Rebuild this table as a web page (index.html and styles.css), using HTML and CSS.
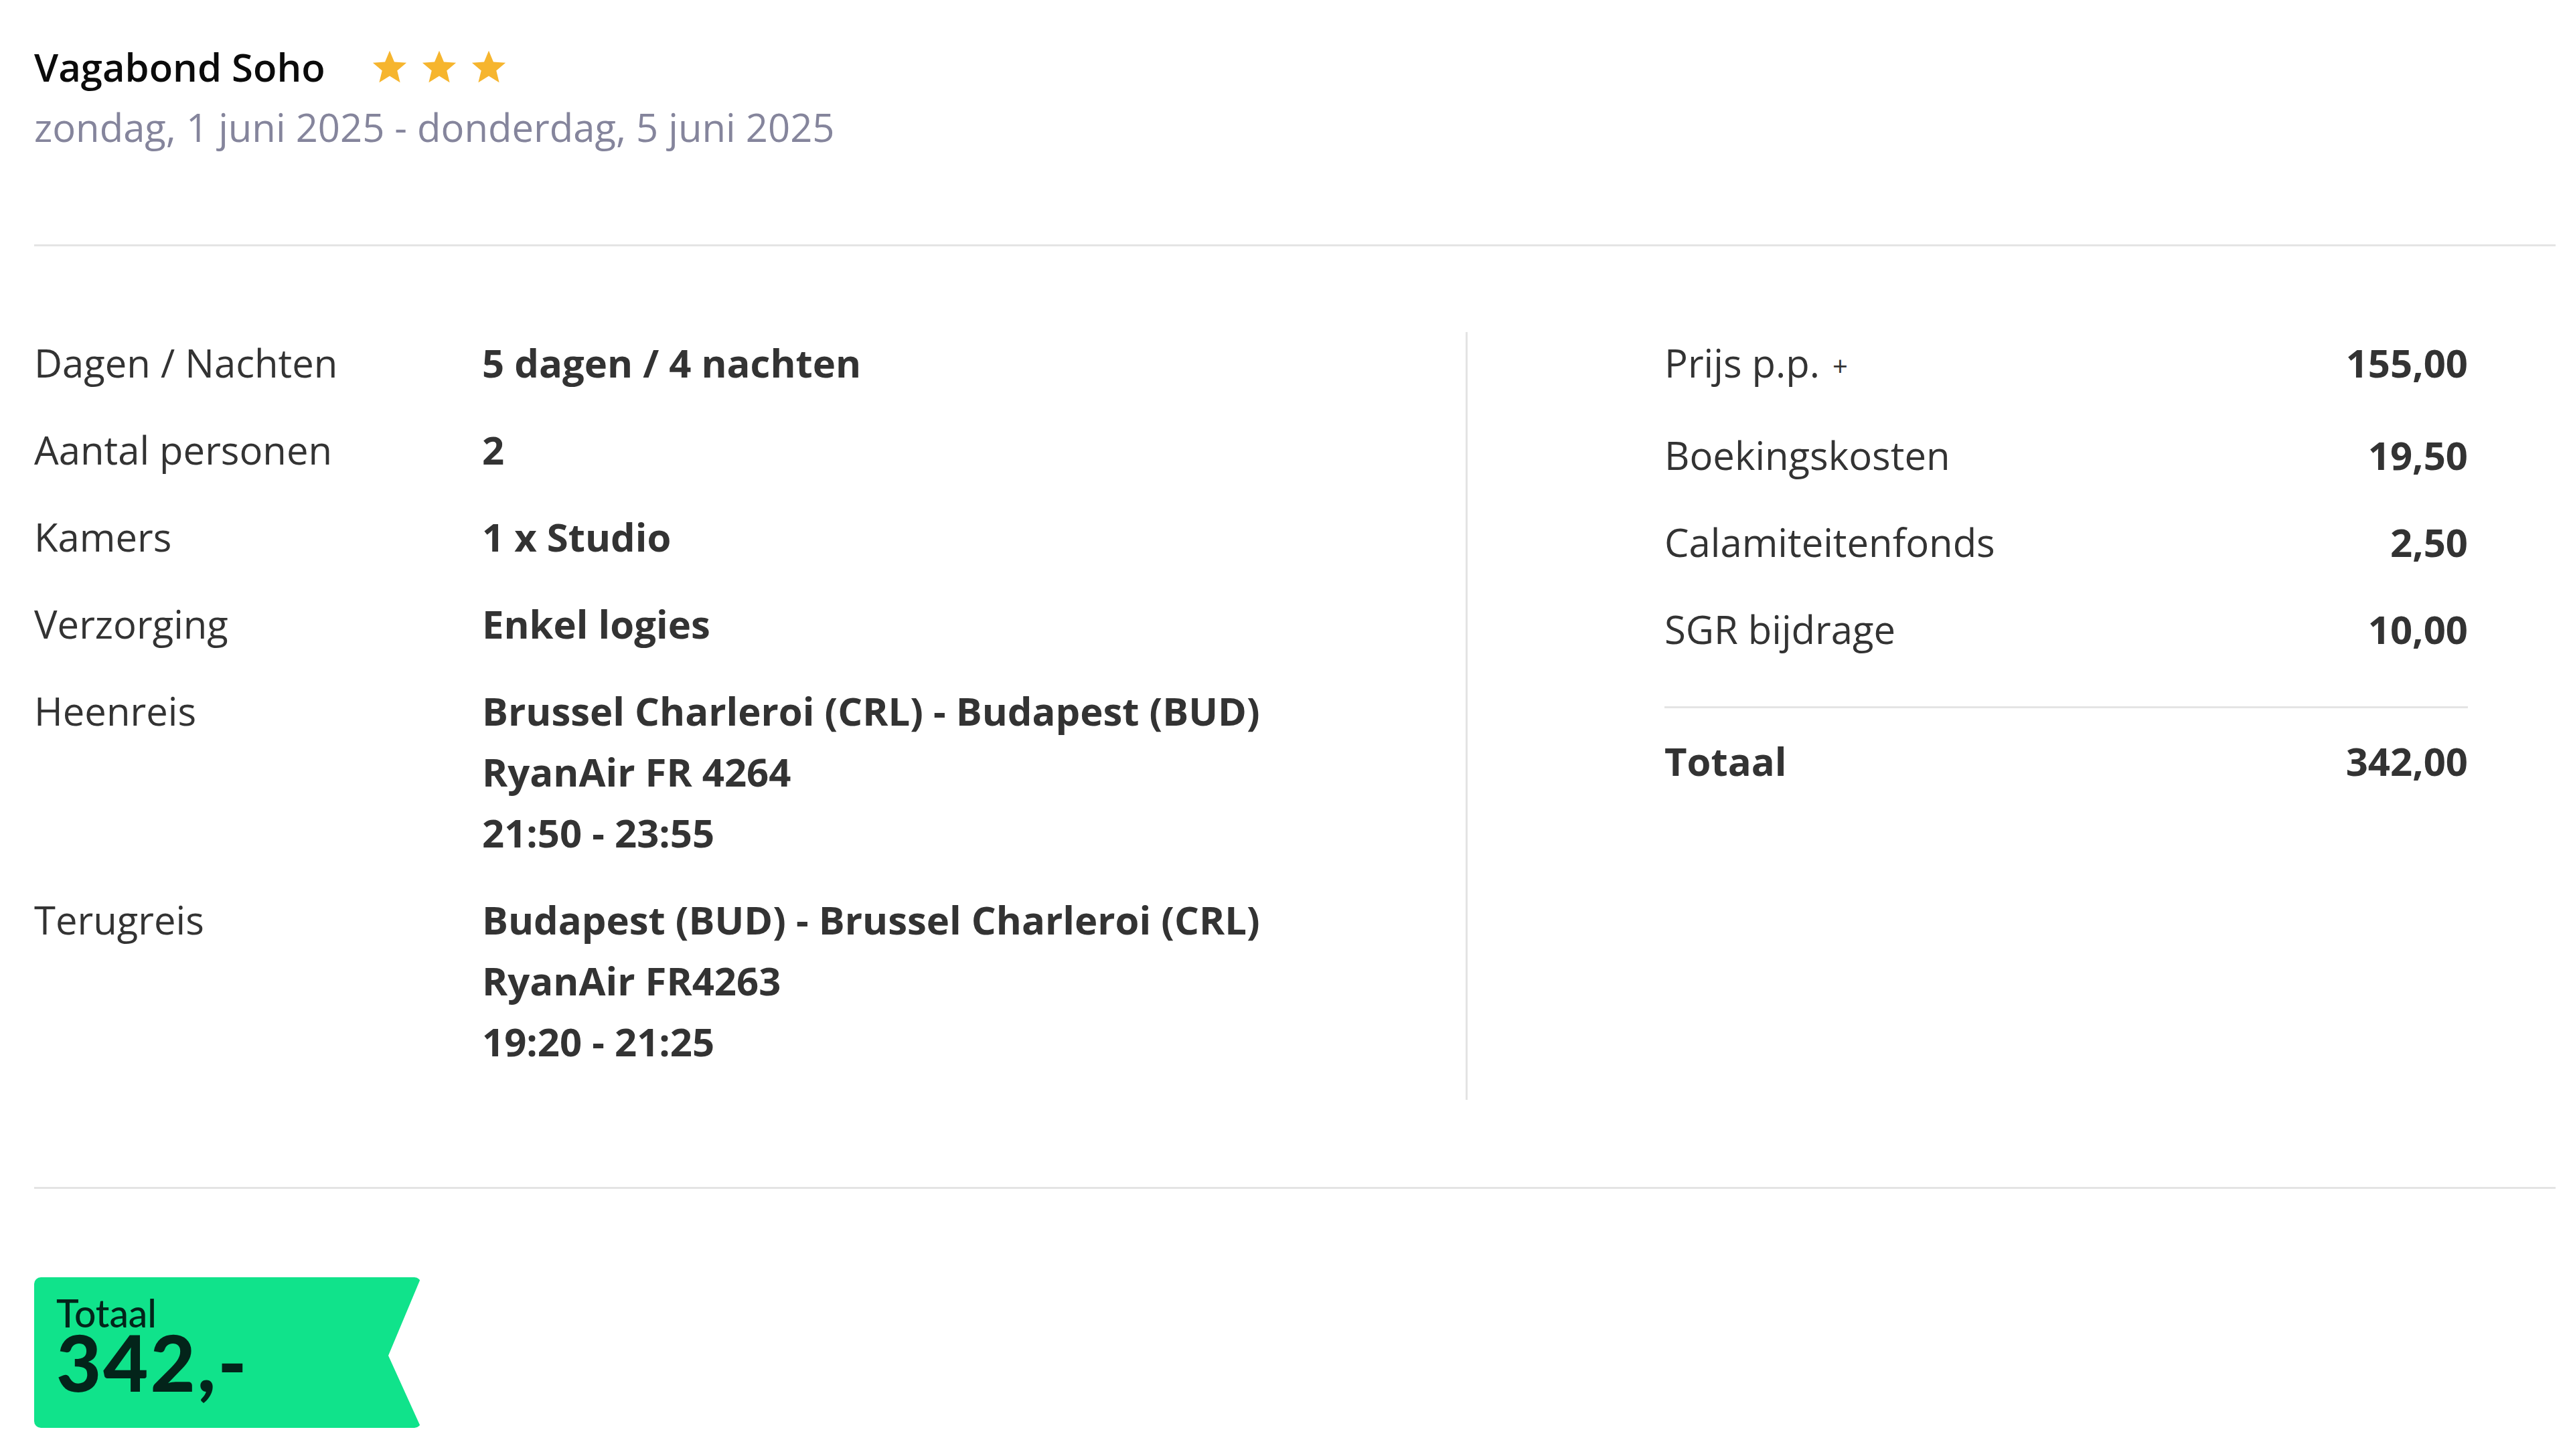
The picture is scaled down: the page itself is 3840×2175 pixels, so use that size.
FILE: index.html
```html
<!DOCTYPE html>
<html lang="nl">
<head>
<meta charset="utf-8">
<title>Vagabond Soho</title>
<link rel="stylesheet" href="styles.css">
</head>
<body>
<div class="page">
  <header class="hotel">
    <div class="title-row">
      <h1 class="hotel-name">Vagabond Soho</h1>
      <div class="stars">
        <svg class="star" viewBox="0 0 24 23"><path d="M12 0.3l3.2 7.7 8.4 0.6-6.4 5.4 2 8.2-7.2-4.5-7.2 4.5 2-8.2L0.4 8.6l8.4-0.6z"/></svg>
        <svg class="star" viewBox="0 0 24 23"><path d="M12 0.3l3.2 7.7 8.4 0.6-6.4 5.4 2 8.2-7.2-4.5-7.2 4.5 2-8.2L0.4 8.6l8.4-0.6z"/></svg>
        <svg class="star" viewBox="0 0 24 23"><path d="M12 0.3l3.2 7.7 8.4 0.6-6.4 5.4 2 8.2-7.2-4.5-7.2 4.5 2-8.2L0.4 8.6l8.4-0.6z"/></svg>
      </div>
    </div>
    <div class="dates">zondag, 1 juni 2025 - donderdag, 5 juni 2025</div>
  </header>

  <div class="rule"></div>

  <section class="details">
    <div class="info">
      <div class="info-row"><div class="label">Dagen / Nachten</div><div class="value">5 dagen / 4 nachten</div></div>
      <div class="info-row"><div class="label">Aantal personen</div><div class="value">2</div></div>
      <div class="info-row"><div class="label">Kamers</div><div class="value">1 x Studio</div></div>
      <div class="info-row"><div class="label">Verzorging</div><div class="value">Enkel logies</div></div>
      <div class="info-row"><div class="label">Heenreis</div><div class="value">Brussel Charleroi (CRL) - Budapest (BUD)<br>RyanAir FR 4264<br>21:50 - 23:55</div></div>
      <div class="info-row"><div class="label">Terugreis</div><div class="value">Budapest (BUD) - Brussel Charleroi (CRL)<br>RyanAir FR4263<br>19:20 - 21:25</div></div>
    </div>
    <div class="prices">
      <div class="price-row"><div class="label">Prijs p.p. <span class="plus">+</span></div><div class="amount">155,00</div></div>
      <div class="price-row"><div class="label">Boekingskosten</div><div class="amount">19,50</div></div>
      <div class="price-row"><div class="label">Calamiteitenfonds</div><div class="amount">2,50</div></div>
      <div class="price-row"><div class="label">SGR bijdrage</div><div class="amount">10,00</div></div>
      <div class="price-rule"></div>
      <div class="price-row total"><div class="label">Totaal</div><div class="amount">342,00</div></div>
    </div>
  </section>

  <div class="rule"></div>

  <div class="badge">
    <div class="badge-label">Totaal</div>
    <div class="badge-amount">342,-</div>
  </div>
</div>
</body>
</html>
```

FILE: styles.css
```css
html, body {
  margin: 0;
  padding: 0;
  background: #ffffff;
}

body {
  font-family: "Open Sans", "Liberation Sans", sans-serif;
  color: #333333;
  font-size: 58px;
}

.page {
  width: 3766px;
  padding-left: 51px;
  padding-top: 58px;
}

.title-row {
  display: flex;
  align-items: center;
  height: 84px;
}

.hotel-name {
  margin: 0 70px 0 0;
  font-size: 58px;
  font-weight: 600;
  line-height: 84px;
  color: #0b0b0b;
}

.stars {
  display: flex;
  gap: 22px;
}

.star {
  width: 52px;
  height: 50px;
  fill: #f6b52e;
  display: block;
}

.dates {
  margin-top: 3px;
  line-height: 89px;
  color: #85859c;
}

.rule {
  height: 3px;
  background: #e4e4e4;
}

.hotel + .rule {
  margin-top: 131px;
}

.details {
  display: flex;
  margin: 128px 0 130px;
}

.info {
  width: 2138px;
  border-right: 3px solid #e4e4e4;
  padding-bottom: 3px;
}

.info-row {
  display: grid;
  grid-template-columns: 669px 1fr;
  line-height: 91px;
  margin-bottom: 39px;
}

.value {
  font-weight: 700;
}

.prices {
  flex: 1;
  padding: 0 131px 0 294px;
}

.price-row {
  display: flex;
  justify-content: space-between;
  line-height: 91px;
  margin-bottom: 39px;
}

.price-row:first-child {
  margin-bottom: 42px;
}

.plus {
  font-size: 40px;
  margin-left: 4px;
  vertical-align: 2px;
}

.amount {
  font-weight: 700;
}

.price-rule {
  height: 3px;
  background: #e4e4e4;
  margin: 70px 0 33px;
}

.price-row.total .label {
  font-weight: 700;
}

.badge {
  margin-top: 132px;
  width: 578px;
  height: 225px;
  box-sizing: border-box;
  padding: 27px 0 0 33px;
  background: #10e38b;
  color: #03241a;
  border-radius: 10px;
  clip-path: polygon(0 0, 100% 0, 529px 117px, 100% 100%, 0 100%);
}

.badge-label {
  font-family: "Lato", "Open Sans", sans-serif;
  font-size: 57px;
  font-weight: 500;
  line-height: 52px;
}

.badge-amount {
  font-family: "Lato", "Open Sans", sans-serif;
  font-size: 116px;
  font-weight: 900;
  line-height: 96px;
  letter-spacing: 3px;
}
```
